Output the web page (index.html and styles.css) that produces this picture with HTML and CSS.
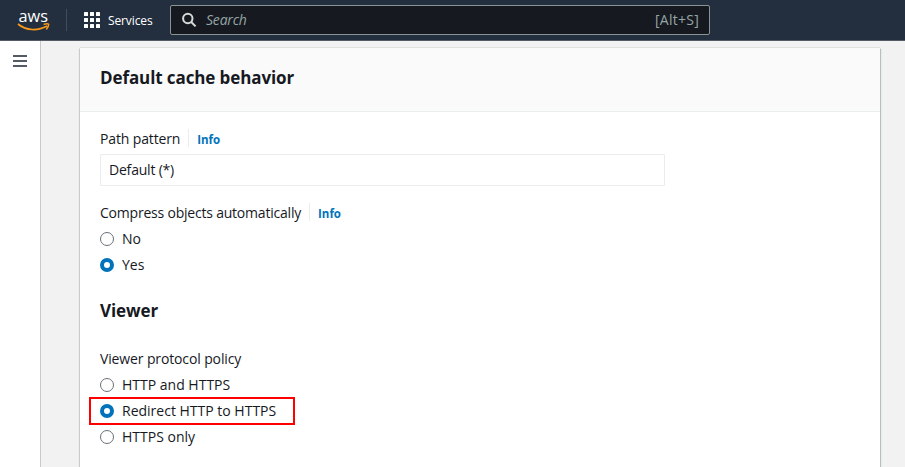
FILE: index.html
```html
<!DOCTYPE html>
<html lang="en">
<head>
<meta charset="utf-8">
<title>Default cache behavior</title>
<link rel="stylesheet" href="styles.css">
</head>
<body>
<header class="topbar">
  <svg class="logo" width="34" height="30" viewBox="0 -6 34 30">
    <text class="logo-text" x="1.500" y="14" textLength="29.500" lengthAdjust="spacingAndGlyphs">aws</text>
    <path d="M1 16C9 23 21 23 30 18" fill="none" stroke="#f7981d" stroke-width="1.700"/>
    <path d="M26.500 16.400Q30.500 15.200 31.700 16.300Q31.800 18.500 29.300 21.500" fill="none" stroke="#f7981d" stroke-width="1.500"/>
  </svg>
  <div class="divider"></div>
  <svg class="grid" width="16" height="16" viewBox="0 0 16 16" fill="#fff">
    <rect width="4" height="4" rx=".5"/><rect x="6" width="4" height="4" rx=".5"/><rect x="12" width="4" height="4" rx=".5"/>
    <rect y="6" width="4" height="4" rx=".5"/><rect x="6" y="6" width="4" height="4" rx=".5"/><rect x="12" y="6" width="4" height="4" rx=".5"/>
    <rect y="12" width="4" height="4" rx=".5"/><rect x="6" y="12" width="4" height="4" rx=".5"/><rect x="12" y="12" width="4" height="4" rx=".5"/>
  </svg>
  <span class="services">Services</span>
  <div class="search">
    <svg width="16" height="16" viewBox="0 0 16 16" fill="none" stroke="#d5dbdb" stroke-width="2"><circle cx="5.800" cy="6.500" r="4.700"/><path d="M9.200 10L13.600 14.400"/></svg>
    <span class="placeholder">Search</span>
    <span class="shortcut">[Alt+S]</span>
  </div>
</header>
<div class="body">
  <nav class="rail"><svg width="14" height="12" viewBox="0 0 14 12" fill="#545b64"><path d="M0 0h14v2H0zM0 5h14v2H0zM0 10h14v2H0z"/></svg></nav>
  <main class="card">
    <div class="card-head"><h2 class="title">Default cache behavior</h2></div>
    <div class="content">
      <div class="label-row"><span class="path-label">Path pattern</span><a class="info">Info</a></div>
      <div class="input"><span class="input-value">Default (*)</span></div>
      <div class="label-row second"><span class="compress-label">Compress objects automatically</span><a class="info">Info</a></div>
      <div class="option"><i class="radio"></i><span>No</span></div>
      <div class="option"><i class="radio on"></i><span>Yes</span></div>
      <h2 class="title viewer">Viewer</h2>
      <div class="policy">Viewer protocol policy</div>
      <div class="option"><i class="radio"></i><span>HTTP and HTTPS</span></div>
      <div class="option marked"><i class="radio on"></i><span>Redirect HTTP to HTTPS</span></div>
      <div class="option"><i class="radio"></i><span>HTTPS only</span></div>
    </div>
  </main>
</div>
</body>
</html>
```
FILE: styles.css
```css
* { box-sizing: border-box; }
body {
  margin: 0;
  height: 467px;
  overflow: hidden;
  background: #f2f2f2;
  color: #16191f;
  font: 14px/20px "Open Sans", "Noto Sans", sans-serif;
}
svg { display: block; flex: none; }
.topbar {
  display: flex;
  align-items: center;
  height: 41px;
  padding-left: 17px;
  background: #232f3e;
  border-bottom: 1px solid #545b64;
}
.logo-text { font: 500 17px "Open Sans", sans-serif; fill: #fff; }
.logo { margin-top: -6px; }
.divider { width: 1px; height: 22px; margin-left: 15px; background: #414d5c; }
.grid { margin-left: 17px; }
.services { width: 46px; margin: 2px 0 0 8px; color: #fff; font-size: 12px; font-weight: 500; letter-spacing: -.12px; white-space: nowrap; }
.search {
  display: flex;
  align-items: center;
  width: 540px;
  height: 30px;
  margin-left: 16px;
  padding: 0 10px 0 11px;
  background: #16191f;
  border: 1px solid #879596;
  border-radius: 2px;
  color: #95a5a6;
}
.placeholder { margin-left: 8px; font-style: italic; letter-spacing: -.2px; }
.shortcut { margin-left: auto; letter-spacing: .25px; }
.body { display: flex; height: 426px; }
.rail { width: 41px; padding: 14px 0 0 13px; background: #fff; border-right: 1px solid #c4caca; }
.card {
  width: 800px;
  height: 440px;
  margin: 7px 0 0 39px;
  background: #fff;
  box-shadow: 0 0 1px #879596, 1px 1px 1px rgba(0, 28, 36, .2), -1px 1px 1px rgba(0, 28, 36, .12);
}
.card-head { height: 64px; padding: 18px 20px; background: #fafafa; border-bottom: 1px solid #eaeded; }
.title { margin: 0; font-size: 17px; line-height: 24px; font-weight: 700; letter-spacing: -.1px; white-space: nowrap; }
.content { padding: 17px 20px 0; }
.label-row { display: flex; height: 20px; line-height: 20px; white-space: nowrap; }
.path-label { letter-spacing: -.14px; }
.compress-label { letter-spacing: -.21px; }
.input-value { letter-spacing: -.2px; }
.info { height: 18px; margin-left: 8px; padding-left: 8px; border-left: 1px solid #eaeded; color: #0073bb; font-size: 11.5px; line-height: 22px; font-weight: 700; }
.input { width: 565px; height: 32px; margin-top: 5px; padding: 5px 8px; border: 1px solid #eaeded; border-radius: 1px; }
.second { margin: 17px 0 6px; }
.option { display: flex; align-items: center; gap: 8px; height: 20px; margin-bottom: 6px; white-space: nowrap; }
.radio { width: 14px; height: 14px; border: 1px solid #687078; border-radius: 50%; background: #fff; }
.radio.on { border: 4px solid #0073bb; }
.viewer { margin-top: 24px; }
.policy { margin: 26px 0 6px; letter-spacing: -.13px; }
.marked { width: 206px; height: 28px; margin: -4px 0 2px -11px; padding-left: 9px; border: 2px solid #f00; }
```
